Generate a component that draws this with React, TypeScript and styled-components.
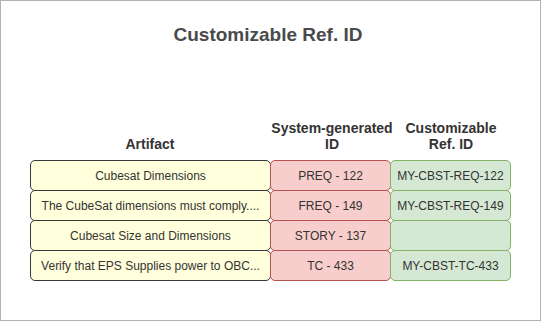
import React from "react";
import styled, { createGlobalStyle } from "styled-components";

const GlobalStyle = createGlobalStyle`
  body {
    margin: 0;
    background: white;
    font-family: "Liberation Sans", Arial, sans-serif;
  }
`;

const colors = {
  artifact: { fill: "#ffffdc", stroke: "#36393d" },
  system: { fill: "#f8cecc", stroke: "#b85450" },
  custom: { fill: "#d5e8d4", stroke: "#82b366" },
};

type Kind = keyof typeof colors;

const rows: { artifact: string; system: string; custom: string }[] = [
  { artifact: "Cubesat Dimensions", system: "PREQ - 122", custom: "MY-CBST-REQ-122" },
  {
    artifact: "The CubeSat dimensions must comply....",
    system: "FREQ - 149",
    custom: "MY-CBST-REQ-149",
  },
  { artifact: "Cubesat Size and Dimensions", system: "STORY - 137", custom: "" },
  {
    artifact: "Verify that EPS Supplies power to OBC...",
    system: "TC - 433",
    custom: "MY-CBST-TC-433",
  },
];

const Frame = styled.div`
  width: 541px;
  height: 321px;
  box-sizing: border-box;
  border: 1px solid #b3b3b3;
  padding: 23px 0 0 29px;
`;

const Title = styled.h1`
  margin: 0 0 0 -29px;
  padding-right: 5px;
  font-size: 19px;
  line-height: 22px;
  font-weight: 700;
  color: #4a4a4a;
  text-align: center;
`;

const HeaderRow = styled.div`
  display: flex;
  margin-top: 74px;
  height: 32px;
  align-items: flex-end;
`;

const HeaderCell = styled.div<{ $width: number }>`
  width: ${(p) => p.$width}px;
  font-size: 14px;
  line-height: 16px;
  font-weight: 700;
  color: #333333;
  text-align: center;
  white-space: nowrap;
`;

const Table = styled.div`
  display: flex;
  flex-direction: column;
  margin-top: 8px;
`;

const Row = styled.div`
  display: flex;
  & + & {
    margin-top: -1px;
  }
`;

const Cell = styled.div<{ $kind: Kind; $width: number }>`
  width: ${(p) => p.$width}px;
  height: 31px;
  box-sizing: border-box;
  display: flex;
  align-items: center;
  justify-content: center;
  background: ${(p) => colors[p.$kind].fill};
  border: 1px solid ${(p) => colors[p.$kind].stroke};
  border-radius: 5px;
  font-size: 12px;
  color: #333333;
  white-space: nowrap;
  & + & {
    margin-left: -1px;
  }
`;

function App() {
  return (
    <>
      <GlobalStyle />
      <Frame>
        <Title>Customizable Ref. ID</Title>
        <HeaderRow>
          <HeaderCell $width={240}>Artifact</HeaderCell>
          <HeaderCell $width={124}>
            System-generated
            <br />
            ID
          </HeaderCell>
          <HeaderCell $width={114}>
            Customizable
            <br />
            Ref. ID
          </HeaderCell>
        </HeaderRow>
        <Table>
          {rows.map((row) => (
            <Row key={row.system}>
              <Cell $kind="artifact" $width={241}>
                {row.artifact}
              </Cell>
              <Cell $kind="system" $width={121}>
                {row.system}
              </Cell>
              <Cell $kind="custom" $width={121}>
                {row.custom}
              </Cell>
            </Row>
          ))}
        </Table>
      </Frame>
    </>
  );
}

export default App;
